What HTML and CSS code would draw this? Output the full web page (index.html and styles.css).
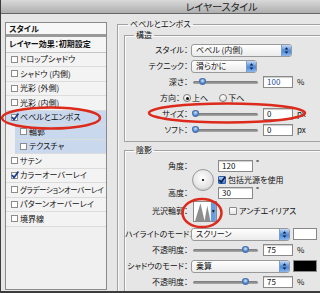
FILE: index.html
```html
<!DOCTYPE html>
<html lang="ja">
<head>
  <meta charset="UTF-8">
  <title>レイヤースタイル</title>
  <link rel="stylesheet" href="styles.css">
</head>
<body>
  <div class="window">
    <div class="titlebar">レイヤースタイル</div>

    <div class="body">
      <!-- effect list -->
      <div class="fx-list">
        <div class="fx-head">スタイル</div>
        <div class="fx-blend">レイヤー効果：初期設定</div>
        <div class="fx-item"><span class="box"></span>ドロップシャドウ</div>
        <div class="fx-item"><span class="box"></span>シャドウ (内側)</div>
        <div class="fx-item"><span class="box"></span>光彩 (外側)</div>
        <div class="fx-item"><span class="box"></span>光彩 (内側)</div>
        <div class="fx-item is-active"><span class="box is-on"><svg viewBox="0 0 8 8"><path d="M1 4 L3 6.5 L7.5 0.5" /></svg></span>ベベルとエンボス</div>
        <div class="fx-item is-sub is-active"><span class="box"></span>輪郭</div>
        <div class="fx-item is-sub is-active"><span class="box"></span>テクスチャ</div>
        <div class="fx-item"><span class="box"></span>サテン</div>
        <div class="fx-item"><span class="box is-on"><svg viewBox="0 0 8 8"><path d="M1 4 L3 6.5 L7.5 0.5" /></svg></span>カラーオーバーレイ</div>
        <div class="fx-item fx-long"><span class="box"></span>グラデーションオーバーレイ</div>
        <div class="fx-item"><span class="box"></span>パターンオーバーレイ</div>
        <div class="fx-item"><span class="box"></span>境界線</div>
      </div>

      <!-- settings -->
      <div class="panel">
        <fieldset class="group group-outer">
          <legend>ベベルとエンボス</legend>

          <fieldset class="group group-inner">
            <legend>構造</legend>
            <div class="row">
              <span class="lbl">スタイル：</span>
              <div class="popup popup-style"><span>ベベル (内側)</span><span class="stepper"><svg viewBox="0 0 10 11"><path d="M3 4.5 L5 2 L7 4.5 Z M3 6.5 L5 9 L7 6.5 Z" /></svg></span></div>
            </div>
            <div class="row">
              <span class="lbl">テクニック：</span>
              <div class="popup popup-tech"><span>滑らかに</span><span class="stepper"><svg viewBox="0 0 10 11"><path d="M3 4.5 L5 2 L7 4.5 Z M3 6.5 L5 9 L7 6.5 Z" /></svg></span></div>
            </div>
            <div class="row">
              <span class="lbl">深さ：</span>
              <div class="slider"><span class="thumb" style="left: 10%"></span></div>
              <span class="num is-focus">100</span>
              <span class="unit">%</span>
            </div>
            <div class="row row-dir">
              <span class="lbl">方向：</span>
              <span class="radio is-on"></span><span class="opt">上へ</span>
              <span class="radio"></span><span class="opt">下へ</span>
            </div>
            <div class="row">
              <span class="lbl">サイズ：</span>
              <div class="slider"><span class="thumb" style="left: 0%"></span></div>
              <span class="num">0</span>
              <span class="unit">px</span>
            </div>
            <div class="row">
              <span class="lbl">ソフト：</span>
              <div class="slider"><span class="thumb" style="left: 0%"></span></div>
              <span class="num">0</span>
              <span class="unit">px</span>
            </div>
          </fieldset>

          <fieldset class="group group-shade">
            <legend>陰影</legend>
            <div class="shade">
              <span class="lbl lbl-angle">角度：</span>
              <span class="dial"></span>
              <div class="cell"><span class="num num-wide">120</span><span class="deg">°</span></div>

              <div class="cell cell-global"><span class="check is-on"><svg viewBox="0 0 8 8"><path d="M1.2 4 L3.2 6.3 L7 1" /></svg></span><span>包括光源を使用</span></div>

              <span class="lbl lbl-alt">高度：</span>
              <div class="cell cell-alt"><span class="num num-wide">30</span><span class="deg">°</span></div>

              <span class="lbl lbl-gloss">光沢輪郭：</span>
              <span class="contour"><svg viewBox="0 0 24 21"><path class="curve" d="M1 21 L7 1.5 L11.5 21 L14.5 4 L18 21 Z" /><rect class="drop" x="18.5" y="0" width="5.5" height="21" /><path class="arrow" d="M19.6 9 L22.8 9 L21.2 12 Z" /></svg></span>
              <div class="cell cell-aa"><span class="check"></span><span>アンチエイリアス</span></div>
            </div>

            <div class="row row-mode">
              <span class="lbl">ハイライトのモード：</span>
              <div class="popup popup-mode"><span>スクリーン</span><span class="stepper"><svg viewBox="0 0 10 11"><path d="M3 4.5 L5 2 L7 4.5 Z M3 6.5 L5 9 L7 6.5 Z" /></svg></span></div>
              <span class="swatch swatch-white"></span>
            </div>
            <div class="row">
              <span class="lbl">不透明度：</span>
              <div class="slider"><span class="thumb" style="left: 77%"></span></div>
              <span class="num">75</span>
              <span class="unit">%</span>
            </div>
            <div class="row">
              <span class="lbl">シャドウのモード：</span>
              <div class="popup popup-mode"><span>乗算</span><span class="stepper"><svg viewBox="0 0 10 11"><path d="M3 4.5 L5 2 L7 4.5 Z M3 6.5 L5 9 L7 6.5 Z" /></svg></span></div>
              <span class="swatch swatch-black"></span>
            </div>
            <div class="row">
              <span class="lbl">不透明度：</span>
              <div class="slider"><span class="thumb" style="left: 77%"></span></div>
              <span class="num">75</span>
              <span class="unit">%</span>
            </div>
          </fieldset>
        </fieldset>
      </div>
    </div>

    <!-- red annotation marks drawn over the dialog -->
    <svg class="marks" viewBox="0 0 320 293">
      <ellipse cx="51" cy="118" rx="49" ry="10.5" />
      <ellipse cx="227" cy="113" rx="78" ry="9.5" />
      <ellipse cx="202" cy="213" rx="19.5" ry="14" />
    </svg>
  </div>
</body>
</html>
```

FILE: styles.css
```css
* {
  box-sizing: border-box;
}

html, body {
  margin: 0;
  padding: 0;
}

body {
  font-family: "Noto Sans CJK JP", "Noto Sans", sans-serif;
  font-size: 8px;
  line-height: 10px;
  color: #111;
  font-feature-settings: "palt";
  background: #e6e6e6;
}

.window {
  position: relative;
  width: 320px;
  height: 293px;
  overflow: hidden;
  background: #e6e6e6;
  border-left: 1px solid #3c3c3c;
  border-bottom: 2px solid #3c3c3c;
}

.titlebar {
  height: 14px;
  padding-left: 122px;
  background: linear-gradient(#d9d9d9, #aeaeae);
  border-bottom: 1px solid #666;
  text-align: center;
  font-size: 10px;
  line-height: 13px;
  color: #222;
}

.body {
  display: flex;
  align-items: flex-start;
  padding: 5px 0 0 4px;
}

/* effect list */
.fx-list {
  flex: none;
  width: 102px;
  height: 268px;
  margin-top: 3px;
  background: #f0f0f0;
  border: 1px solid #8a8a8a;
}

.fx-head {
  height: 14px;
  padding-left: 3px;
  line-height: 11px;
  font-weight: bold;
  background: #f7f7f7;
  border-bottom: 3px solid #999;
}

.fx-blend {
  height: 15.5px;
  padding-left: 3px;
  line-height: 14px;
  font-weight: bold;
  background: #f5f5f5;
  border-bottom: 1px solid #c4c4c4;
}

.fx-item {
  display: flex;
  align-items: center;
  gap: 2px;
  height: 14.5px;
  padding-left: 5px;
  white-space: nowrap;
  background: #f3f3f3;
  border-bottom: 1px solid #dcdcdc;
}

.fx-item.is-active {
  background: #c9d8ec;
}

.fx-item.is-sub {
  margin-left: 9px;
}

.fx-long {
  font-size: 7.5px;
  letter-spacing: -0.4px;
}

.box {
  flex: none;
  width: 7px;
  height: 7px;
  background: #fff;
  border: 1px solid #8c8c8c;
  position: relative;
}

.box svg {
  position: absolute;
  left: -1px;
  top: -2px;
  width: 8px;
  height: 8px;
  fill: none;
  stroke: #1d3f8a;
  stroke-width: 1.8;
}

/* settings panel */
.panel {
  flex: none;
  margin-left: 10px;
}

.group {
  margin: 0;
  min-width: 0;
  border: 1px solid #a2a2a2;
  box-shadow: 1px 1px 0 #fafafa inset;
}

.group legend {
  padding: 0 2px;
  line-height: 10px;
}

.group-outer {
  width: 220px;
  padding: 1px 0 0 6px;
}

.group-outer > legend {
  margin-left: 4px;
}

.group-inner {
  padding: 2px 0 3px 0;
}

.group-inner > legend,
.group-shade > legend {
  margin-left: 9px;
}

.group-shade {
  margin-top: 3px;
  padding: 5px 0 10px 0;
}

.row {
  display: flex;
  align-items: center;
  height: 16px;
}

.lbl {
  flex: none;
  width: 63px;
  margin-right: 3px;
  text-align: right;
  white-space: nowrap;
}

.popup {
  display: flex;
  align-items: center;
  height: 13px;
  padding-left: 4px;
  background: linear-gradient(#fff, #ebebeb);
  border: 1px solid #999;
  border-radius: 3px;
}

.popup-style {
  width: 101px;
}

.popup-tech {
  width: 66px;
}

.popup-mode {
  width: 99px;
}

.stepper {
  display: flex;
  margin-left: auto;
  width: 10px;
  height: 11px;
  background: linear-gradient(#c4d9f5, #4a87db 55%, #8db7ee);
  border-left: 1px solid #7d9cc8;
  border-radius: 0 2px 2px 0;
}

.stepper svg {
  width: 10px;
  height: 11px;
  fill: #0d1b3a;
}

.slider {
  position: relative;
  flex: none;
  width: 65px;
  height: 8px;
  margin-left: 2px;
}

.slider::before {
  content: "";
  position: absolute;
  left: 0;
  right: 0;
  top: 3px;
  height: 3px;
  background: linear-gradient(#777, #aaa);
  border-radius: 2px;
}

.thumb {
  position: absolute;
  top: 0;
  width: 7px;
  height: 7px;
  margin-left: -1px;
  background: radial-gradient(circle at 50% 35%, #d5e6fb, #3d7fd6 70%);
  border: 1px solid #4a6fa6;
  border-radius: 50% 50% 50% 50% / 40% 40% 60% 60%;
}

.num {
  flex: none;
  width: 30px;
  height: 12px;
  margin-left: 5px;
  padding-left: 3px;
  line-height: 10px;
  background: #fff;
  border: 1px solid #8a8a8a;
  box-shadow: inset 0 1px 1px rgba(0, 0, 0, 0.2);
}

.num.is-focus {
  color: #2c4f9e;
}

.num-wide {
  width: 35px;
  margin-left: 0;
}

.unit {
  margin-left: 4px;
}

.deg {
  margin-left: 3px;
  align-self: flex-start;
  line-height: 6px;
}

.row-dir .lbl {
  width: 55px;
}

.radio {
  flex: none;
  width: 8px;
  height: 8px;
  background: linear-gradient(#fff, #e2e2e2);
  border: 1px solid #777;
  border-radius: 50%;
  position: relative;
}

.radio.is-on::after {
  content: "";
  position: absolute;
  left: 1.5px;
  top: 1.5px;
  width: 3px;
  height: 3px;
  background: #111;
  border-radius: 50%;
}

.opt {
  margin-left: 1px;
  margin-right: 11px;
}

/* shading block */
.shade {
  display: grid;
  grid-template-columns: 63px 24px auto;
  grid-template-rows: 12px 15px 12px 24px;
  column-gap: 3px;
}

.shade .lbl {
  width: auto;
  margin-right: 0;
  align-self: center;
}

.lbl-angle {
  grid-column: 1;
  grid-row: 1;
}

.dial {
  grid-column: 2;
  grid-row: 1 / 4;
  align-self: center;
  justify-self: center;
  width: 22px;
  height: 22px;
  border: 1px solid #9a9a9a;
  border-radius: 50%;
  background: radial-gradient(circle at 50% 50%, #333 0 1px, transparent 1.5px),
              radial-gradient(circle at 45% 40%, #fdfdfd, #d4d4d4);
  box-shadow: inset 0 -1px 1px rgba(0, 0, 0, 0.1);
}

.cell {
  display: flex;
  align-items: center;
  grid-column: 3;
}

.cell-global {
  grid-row: 2;
  gap: 2px;
}

.lbl-alt {
  grid-column: 1;
  grid-row: 3;
}

.cell-alt {
  grid-row: 3;
}

.lbl-gloss {
  grid-column: 1;
  grid-row: 4;
}

.contour {
  grid-column: 2;
  grid-row: 4;
  align-self: center;
  width: 24px;
  height: 21px;
  margin-left: 2px;
  background: #fff;
  border: 1px solid #8a8a8a;
}

.contour svg {
  display: block;
  width: 22px;
  height: 19px;
}

.contour .curve {
  fill: #8e8e8e;
}

.contour .drop {
  fill: #6a9be0;
}

.contour .arrow {
  fill: #111;
}

.cell-aa {
  grid-row: 4;
  gap: 2px;
  margin-left: 11px;
}

.check {
  flex: none;
  width: 8px;
  height: 8px;
  background: linear-gradient(#fff, #e4e4e4);
  border: 1px solid #888;
  border-radius: 1px;
  position: relative;
}

.check.is-on {
  background: linear-gradient(#b4d0f4, #3a7cd8);
  border-color: #2f5d9e;
}

.check svg {
  position: absolute;
  left: -1px;
  top: -1px;
  width: 8px;
  height: 8px;
  fill: none;
  stroke: #0c1d44;
  stroke-width: 1.6;
}

.row-mode {
  margin-top: 3px;
}

.swatch {
  flex: none;
  width: 24px;
  height: 12px;
  margin-left: 3px;
  border: 1px solid #888;
}

.swatch-white {
  background: #fff;
}

.swatch-black {
  background: #000;
}

/* annotations */
.marks {
  position: absolute;
  left: -1px;
  top: 0;
  width: 320px;
  height: 293px;
  pointer-events: none;
}

.marks ellipse {
  fill: none;
  stroke: #dc2a1c;
  stroke-width: 2.5;
}
```
